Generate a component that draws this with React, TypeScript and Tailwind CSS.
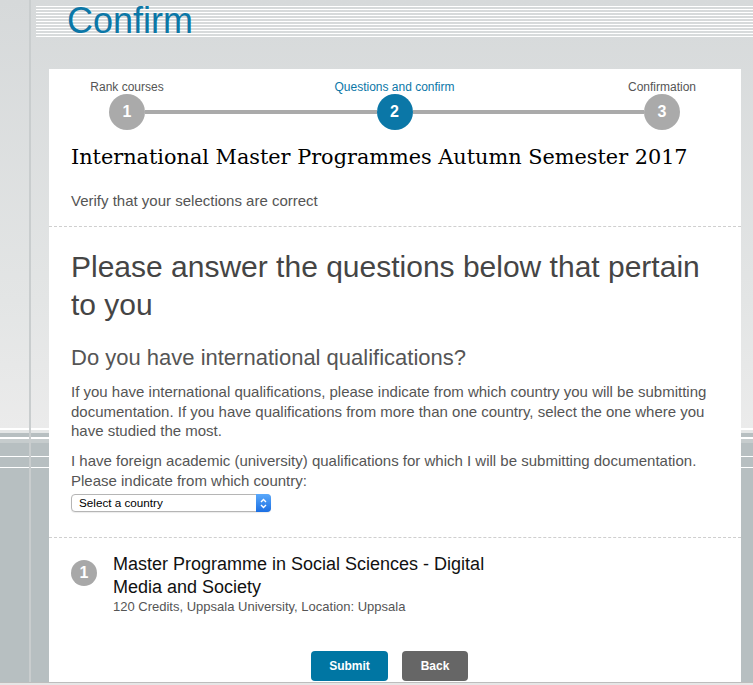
import React from "react";

const steps = [
  { n: 1, label: "Rank courses", active: false },
  { n: 2, label: "Questions and confirm", active: true },
  { n: 3, label: "Confirmation", active: false },
];

function Stepper() {
  return (
    <div className="pt-[11px] pl-[60px] pr-[61px]">
      <div className="flex justify-between">
        {steps.map((s) => (
          <div key={s.n} className="w-[36px] flex justify-center">
            <span
              className={`whitespace-nowrap text-[12px] leading-[14px] ${
                s.active ? "text-[#0b77a7]" : "text-[#555]"
              }`}
            >
              {s.label}
            </span>
          </div>
        ))}
      </div>
      <div className="flex items-center">
        {steps.map((s, i) => (
          <React.Fragment key={s.n}>
            {i > 0 && <div className="h-[4px] flex-1 bg-[#aaaaaa]" />}
            <div
              className={`flex h-[36px] w-[36px] shrink-0 items-center justify-center rounded-full text-[16px] font-bold text-white ${
                s.active ? "bg-[#0b77a7]" : "bg-[#aaaaaa]"
              }`}
            >
              {s.n}
            </div>
          </React.Fragment>
        ))}
      </div>
    </div>
  );
}

function CountrySelect() {
  return (
    <div className="mt-[4px] flex h-[18px] w-[200px] items-center rounded-[4px] border border-[#b5b5b5] bg-white shadow-[0_1px_1px_rgba(0,0,0,0.08)]">
      <span className="flex-1 pl-[7px] text-[11.7px] leading-none text-black">Select a country</span>
      <span className="flex h-[18px] w-[15px] -mr-px -my-px items-center justify-center rounded-r-[4px] bg-[linear-gradient(to_bottom,#5aa9fb,#1b6fe3)]">
        <svg width="7" height="11" viewBox="0 0 7 11" fill="none" stroke="white" strokeWidth="1.4">
          <path d="M1 4 L3.5 1.5 L6 4" />
          <path d="M1 7 L3.5 9.5 L6 7" />
        </svg>
      </span>
    </div>
  );
}

export default function App() {
  return (
    <div className="h-[685px] w-full overflow-hidden font-['Liberation_Sans',Arial,sans-serif] bg-[linear-gradient(to_bottom,#d6d9da_0px,#e3e5e5_300px,#ebebeb_428px,#ffffff_428px,#ffffff_430px,#e4e6e6_430px,#e4e6e6_433px,#b7bfc1_433px,#b7bfc1_437px,#ffffff_437px,#ffffff_439px,#c6cccd_439px,#c6cccd_443px,#b7bfc1_443px,#b7bfc1_456px,#ffffff_456px,#ffffff_457px,#b7bfc1_457px,#b7bfc1_467px,#ffffff_467px,#ffffff_468px,#b7bfc1_468px)]">
      <div className="flex h-[682px]">
        <div className="w-[29px] shrink-0" />
        <div className="w-[2px] shrink-0 bg-[#c9cdce]" />
        <div className="flex-1">
          {/* header with stripes */}
          <div className="flow-root ml-[5px] mt-[6px] h-[31px] bg-[repeating-linear-gradient(to_bottom,#ffffff_0px,#ffffff_1px,transparent_1px,transparent_3px)]">
            <h1 className="-mt-[3px] pl-[31px] text-[36px] leading-none text-[#0b77a7]">Confirm</h1>
          </div>

          {/* white panel */}
          <div className="ml-[18px] mt-[32px] h-[613px] w-[692px] bg-white">
            <Stepper />

            <div className="px-[22px]">
              <h2 className="mt-[13px] font-['DejaVu_Serif',Georgia,serif] text-[20.8px] leading-[28px] text-black">
                International Master Programmes Autumn Semester 2017
              </h2>
              <p className="mt-[20px] text-[15px] leading-[20px] text-[#555]">
                Verify that your selections are correct
              </p>
            </div>

            <div className="mt-[15px] border-t border-dashed border-[#cfcfcf]" />

            <div className="px-[22px]">
              <h2 className="mt-[21px] text-[30px] leading-[38px] text-[#454545]">
                Please answer the questions below that pertain to you
              </h2>
              <h3 className="mt-[21px] text-[22px] leading-[26px] text-[#555]">
                Do you have international qualifications?
              </h3>
              <p className="mt-[11px] text-[15px] leading-[19.5px] text-[#555]">
                If you have international qualifications, please indicate from which country you will be submitting
                documentation. If you have qualifications from more than one country, select the one where you
                have studied the most.
              </p>
              <p className="mt-[10.5px] text-[15px] leading-[19.5px] text-[#555]">
                I have foreign academic (university) qualifications for which I will be submitting documentation.
                Please indicate from which country:
              </p>
              <CountrySelect />
            </div>

            <div className="mt-[25px] border-t border-dashed border-[#cfcfcf]" />

            <div className="flex items-start gap-[16px] px-[22px] pt-[15px]">
              <div className="mt-[6.5px] flex h-[26px] w-[26px] shrink-0 items-center justify-center rounded-full bg-[#a8a8a8] text-[16px] font-bold text-white">
                1
              </div>
              <div>
                <div className="w-[380px] text-[18px] leading-[23px] text-[#111]">
                  Master Programme in Social Sciences - Digital Media and Society
                </div>
                <div className="text-[13px] leading-[16px] text-[#555]">
                  120 Credits, Uppsala University, Location: Uppsala
                </div>
              </div>
            </div>

            <div className="mt-[35.5px] flex justify-center gap-[14px] pr-[11px]">
              <button className="h-[30px] w-[77px] rounded-[4px] bg-[#0076a3] text-[12px] font-bold text-white">
                Submit
              </button>
              <button className="h-[30px] w-[66px] rounded-[4px] bg-[#666666] text-[12px] font-bold text-white">
                Back
              </button>
            </div>
          </div>
        </div>
      </div>
      <div className="h-[3px] border-t border-[#bdbdbd] bg-[#e6e6e6]" />
    </div>
  );
}
